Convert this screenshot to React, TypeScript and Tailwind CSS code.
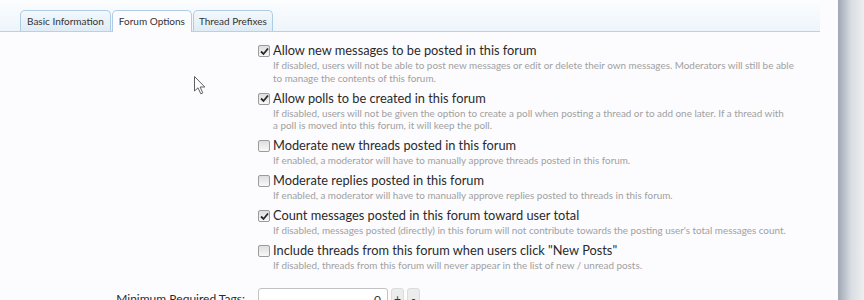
import React from "react";

type Opt = { checked: boolean; label: string; hint: string[] };

const options: Opt[] = [
  {
    checked: true,
    label: "Allow new messages to be posted in this forum",
    hint: [
      "If disabled, users will not be able to post new messages or edit or delete their own messages. Moderators will still be able",
      "to manage the contents of this forum.",
    ],
  },
  {
    checked: true,
    label: "Allow polls to be created in this forum",
    hint: [
      "If disabled, users will not be given the option to create a poll when posting a thread or to add one later. If a thread with",
      "a poll is moved into this forum, it will keep the poll.",
    ],
  },
  {
    checked: false,
    label: "Moderate new threads posted in this forum",
    hint: ["If enabled, a moderator will have to manually approve threads posted in this forum."],
  },
  {
    checked: false,
    label: "Moderate replies posted in this forum",
    hint: ["If enabled, a moderator will have to manually approve replies posted to threads in this forum."],
  },
  {
    checked: true,
    label: "Count messages posted in this forum toward user total",
    hint: [
      "If disabled, messages posted (directly) in this forum will not contribute towards the posting user's total messages count.",
    ],
  },
  {
    checked: false,
    label: 'Include threads from this forum when users click "New Posts"',
    hint: ["If disabled, threads from this forum will never appear in the list of new / unread posts."],
  },
];

function Box({ checked }: { checked: boolean }) {
  return (
    <div className="mt-[3px] w-[12px] h-[12px] shrink-0 rounded-[2px] border border-[#9c9c9c] bg-gradient-to-b from-[#dedede] to-[#f8f8f8] flex items-center justify-center">
      {checked && (
        <svg width="9" height="9" viewBox="0 0 9 9">
          <path d="M1 4.5 L3.5 7 L8 1.5" fill="none" stroke="#2a2a2a" strokeWidth="1.8" />
        </svg>
      )}
    </div>
  );
}

export default function App() {
  return (
    <div
      className="relative w-[864px] h-[300px] overflow-hidden bg-[#fcfcfe] flex"
      style={{ fontFamily: "Lato, 'Open Sans', sans-serif" }}
    >
      <div className="w-[838px] flex flex-col">
        <div className="shrink-0 h-[32px] w-[820px] border-b border-[#b5d2e6] bg-gradient-to-b from-[#fcfdff] to-[#edf5fb] flex items-end pl-[20px] gap-[1px]">
          <div className="h-[21px] px-[6px] flex items-center rounded-t-[5px] border border-b-0 border-[#aecde4] bg-gradient-to-b from-[#f3f8fc] to-[#dfecf6] text-[10px] text-[#333]">
            Basic Information
          </div>
          <div className="h-[22px] -mb-px px-[6px] flex items-center rounded-t-[5px] border border-b-0 border-[#aecde4] bg-[#fcfcfe] text-[10px] text-[#333]">
            Forum Options
          </div>
          <div className="h-[21px] px-[5px] flex items-center rounded-t-[5px] border border-b-0 border-[#aecde4] bg-gradient-to-b from-[#f3f8fc] to-[#dfecf6] text-[10px] text-[#333]">
            Thread Prefixes
          </div>
        </div>

        <div className="shrink-0 pt-[10px] pl-[258px] flex flex-col gap-[5.5px]">
          {options.map((o, i) => (
            <div key={i} className="flex gap-[3px]">
              <Box checked={o.checked} />
              <div className="flex flex-col">
                <div className="text-[12.8px] leading-[17px] text-[#2a2a2a] whitespace-nowrap">{o.label}</div>
                {o.hint.map((h, j) => (
                  <div key={j} className="text-[9.9px] leading-[12.5px] text-[#a0a0a0] whitespace-nowrap">
                    {h}
                  </div>
                ))}
              </div>
            </div>
          ))}
        </div>

        <div className="shrink-0 mt-[16px] flex items-start">
          <div className="w-[245px] text-right text-[12px] leading-[17px] text-[#2a2a2a] pt-[2px]">
            Minimum Required Tags:
          </div>
          <div className="ml-[13px] w-[130px] h-[24px] rounded-[3px] border border-[#c3c3c3] bg-white flex items-start justify-end pt-[2px] pr-[6px] text-[12px] leading-[17px] text-[#333]">
            0
          </div>
          <div className="ml-[3px] w-[13px] h-[22px] rounded-[3px] bg-[#ececec] border border-[#dcdcdc] flex items-start justify-center pt-[1px] text-[12px] leading-[17px] text-[#333]">
            +
          </div>
          <div className="ml-[3px] w-[13px] h-[22px] rounded-[3px] bg-[#ececec] border border-[#dcdcdc] flex items-start justify-center pt-[1px] text-[12px] leading-[17px] text-[#333]">
            -
          </div>
        </div>
      </div>
      <div className="w-[26px] h-full bg-gradient-to-r from-[#9ea7b4] via-[#d9dde2] to-[#eeeeee]" />

      <svg className="absolute left-[194px] top-[76px]" width="12" height="19" viewBox="0 0 12 19">
        <path
          d="M0.5 0.5 L0.5 15 L4 11.8 L6.8 17.8 L8.8 16.9 L6.1 11 L10.8 11 Z"
          fill="#ffffff"
          stroke="#606060"
          strokeWidth="1"
        />
      </svg>
    </div>
  );
}
